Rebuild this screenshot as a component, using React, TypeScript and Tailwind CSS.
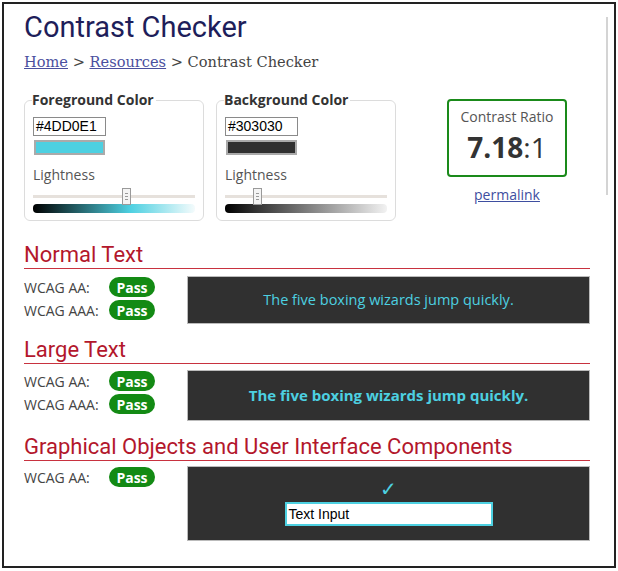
import React from 'react';

const sans = "font-['Open_Sans',sans-serif]";
const roboto = "font-['Roboto',sans-serif]";

function ColorBox({
  title,
  hex,
  swatch,
  gradient,
  thumb,
}: {
  title: string;
  hex: string;
  swatch: string;
  gradient: string;
  thumb: string;
}) {
  return (
    <fieldset className="h-[128px] w-[180px] rounded-[6px] border border-[#dcdcdc] px-[8px] pt-0">
      <legend className={`${sans} -ml-[1px] px-0 pr-[2px] text-[14px] leading-[14px] font-bold text-[#333]`}>
        {title}
      </legend>
      <div className="mt-[10px] flex h-[19px] w-[73px] items-center border border-[#8a8a8a] bg-white px-[2px] font-['Liberation_Sans',sans-serif] text-[14px] text-black">
        {hex}
      </div>
      <div className={`ml-[1px] mt-[4px] h-[15px] w-[71px] border-2 border-[#aaa] ${swatch}`} />
      <div className={`${sans} mt-[10px] text-[14px] leading-[20px] text-[#555]`}>Lightness</div>
      <div className="relative mt-[10px] h-[3px] w-[162px] bg-[#e6e1dc]">
        <div
          className={`absolute -top-[7px] flex h-[17px] w-[9px] flex-col items-center justify-center gap-[2px] border border-[#9a9a9a] bg-[#f4f4f4] ${thumb}`}
        >
          <span className="h-px w-[3px] bg-[#999]" />
          <span className="h-px w-[3px] bg-[#999]" />
          <span className="h-px w-[3px] bg-[#999]" />
        </div>
      </div>
      <div className={`mt-[6px] h-[9px] w-[162px] rounded-[4px] ${gradient}`} />
    </fieldset>
  );
}

function Pass() {
  return (
    <span className={`${sans} flex h-[20px] w-[46px] items-center justify-center rounded-full bg-[#138a14] text-[14px] font-bold text-white`}>
      Pass
    </span>
  );
}

function Rows({ labels }: { labels: string[] }) {
  return (
    <div className="flex w-[163px] shrink-0 flex-col gap-[3px] pt-[1px]">
      {labels.map((l) => (
        <div key={l} className="flex h-[20px] items-center">
          <span className={`${sans} w-[85px] text-[14px] text-[#444]`}>{l}</span>
          <Pass />
        </div>
      ))}
    </div>
  );
}

function Heading({ children }: { children: React.ReactNode }) {
  return (
    <div className={`${roboto} h-[27px] border-b border-[#c8323f] text-[22px] leading-[26px] text-[#b3172c]`}>
      {children}
    </div>
  );
}

export default function App() {
  return (
    <div className="h-[571px] w-[618px] bg-white pl-[2px] pt-[2px]">
      <div className="relative h-[566px] w-[614px] overflow-hidden border-2 border-[#222] pl-[20px]">
        <div className="absolute right-[6px] top-[13px] h-[178px] w-[2px] bg-[#d4d4d4]" />
        <h1 className={`${roboto} mt-[5px] text-[29px] leading-[36px] text-[#1e1e5a]`}>Contrast Checker</h1>
        <div className="mt-[7px] font-['DejaVu_Serif',serif] text-[14.6px] leading-[20px] text-[#444]">
          <a className="text-[#4a4f9e] underline">Home</a> &gt;{' '}
          <a className="text-[#4a4f9e] underline">Resources</a> &gt; Contrast Checker
        </div>

        <div className="mt-[21px] flex items-start gap-[12px]">
          <ColorBox
            title="Foreground Color"
            hex="#4DD0E1"
            swatch="bg-[#4DD0E1]"
            gradient="bg-[linear-gradient(to_right,#000,#4DD0E1_60%,#f4fbfc)]"
            thumb="left-[89px]"
          />
          <ColorBox
            title="Background Color"
            hex="#303030"
            swatch="bg-[#303030]"
            gradient="bg-[linear-gradient(to_right,#000,#303030_18%,#f2f2f2)]"
            thumb="left-[28px]"
          />
          <div className="ml-[39px] mt-[6px] flex flex-col items-center">
            <div className="flex h-[78px] w-[120px] flex-col items-center rounded-[4px] border-2 border-[#1a8a1a] pt-[6px]">
              <span className={`${sans} text-[14px] leading-[20px] text-[#555]`}>Contrast Ratio</span>
              <span className={`${sans} mt-[2px] text-[28px] leading-[36px] text-[#333]`}>
                <b>7.18</b>:1
              </span>
            </div>
            <a className={`${sans} mt-[8px] text-[14px] leading-[20px] text-[#3e4ea0] underline`}>permalink</a>
          </div>
        </div>

        <div className="w-[566px]">
          <div className="mt-[21px]">
            <Heading>Normal Text</Heading>
            <div className="mt-[7px] flex">
              <Rows labels={['WCAG AA:', 'WCAG AAA:']} />
              <div className={`${sans} flex h-[48px] flex-1 items-center justify-center border border-[#bbb] bg-[#303030] text-[14.5px] text-[#4DD0E1]`}>
                The five boxing wizards jump quickly.
              </div>
            </div>
          </div>

          <div className="mt-[13px]">
            <Heading>Large Text</Heading>
            <div className="mt-[6px] flex">
              <Rows labels={['WCAG AA:', 'WCAG AAA:']} />
              <div className={`${sans} flex h-[51px] flex-1 items-center justify-center border border-[#bbb] bg-[#303030] text-[15px] font-bold text-[#4DD0E1]`}>
                The five boxing wizards jump quickly.
              </div>
            </div>
          </div>

          <div className="mt-[13px]">
            <Heading>Graphical Objects and User Interface Components</Heading>
            <div className="mt-[5px] flex">
              <Rows labels={['WCAG AA:']} />
              <div className="flex h-[75px] flex-1 flex-col items-center border border-[#bbb] bg-[#303030] pt-[10px]">
                <span className="font-['DejaVu_Sans',sans-serif] text-[20px] leading-[24px] text-[#4DD0E1]">✓</span>
                <div className="mt-px flex h-[24px] w-[208px] items-center border-2 border-[#4DD0E1] bg-white px-[2px] font-['Liberation_Sans',sans-serif] text-[14px] text-black">
                  Text Input
                </div>
              </div>
            </div>
          </div>
        </div>
      </div>
    </div>
  );
}
